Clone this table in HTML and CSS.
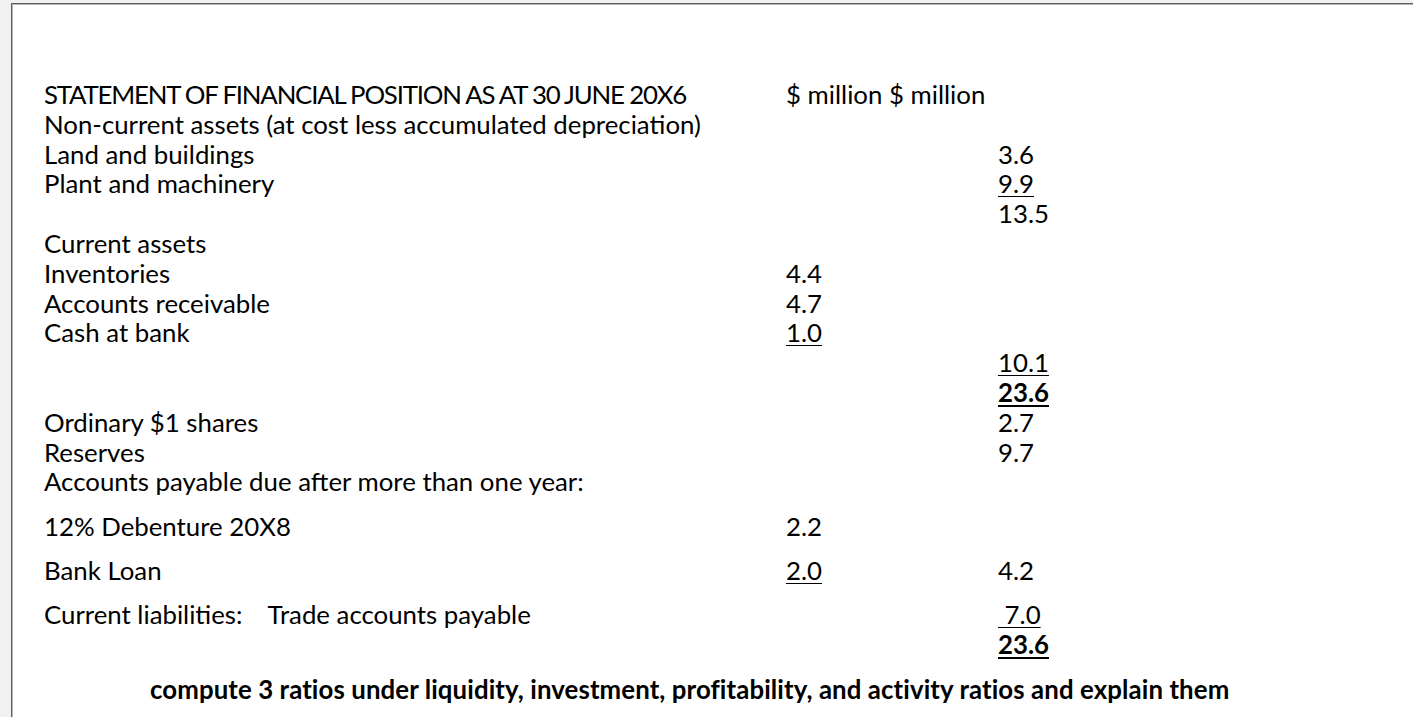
FILE: index.html
```html
<!DOCTYPE html>
<html>
<head>
<meta charset="utf-8">
<link rel="stylesheet" href="styles.css">
</head>
<body>
<div class="frame">
  <div class="sheet">
    <div class="row"><div class="label title">STATEMENT OF FINANCIAL POSITION AS AT 30 JUNE 20X6</div><div class="c1 wide">$ million $ million</div></div>
    <div class="row"><div class="label">Non-current assets (at cost less accumulated depreciation)</div></div>
    <div class="row"><div class="label">Land and buildings</div><div class="c1"></div><div class="c2">3.6</div></div>
    <div class="row"><div class="label">Plant and machinery</div><div class="c1"></div><div class="c2"><span class="u">9.9</span></div></div>
    <div class="row"><div class="label"></div><div class="c1"></div><div class="c2">13.5</div></div>
    <div class="row"><div class="label">Current assets</div></div>
    <div class="row"><div class="label">Inventories</div><div class="c1">4.4</div></div>
    <div class="row"><div class="label">Accounts receivable</div><div class="c1">4.7</div></div>
    <div class="row"><div class="label">Cash at bank</div><div class="c1"><span class="u">1.0</span></div></div>
    <div class="row"><div class="label"></div><div class="c1"></div><div class="c2"><span class="u">10.1</span></div></div>
    <div class="row"><div class="label"></div><div class="c1"></div><div class="c2"><span class="u b">23.6</span></div></div>
    <div class="row"><div class="label">Ordinary $1 shares</div><div class="c1"></div><div class="c2">2.7</div></div>
    <div class="row"><div class="label">Reserves</div><div class="c1"></div><div class="c2">9.7</div></div>
    <div class="row"><div class="label">Accounts payable due after more than one year:</div></div>
    <div class="row gap"><div class="label">12% Debenture 20X8</div><div class="c1">2.2</div></div>
    <div class="row gap"><div class="label">Bank Loan</div><div class="c1"><span class="u">2.0</span></div><div class="c2">4.2</div></div>
    <div class="row gap"><div class="label">Current liabilities:<span class="tab">Trade accounts payable</span></div><div class="c1"></div><div class="c2"><span class="u">&nbsp;7.0</span></div></div>
    <div class="row"><div class="label"></div><div class="c1"></div><div class="c2"><span class="u b">23.6</span></div></div>
    <div class="question">compute 3 ratios under liquidity, investment, profitability, and activity ratios and explain them</div>
  </div>
</div>
</body>
</html>
```

FILE: styles.css
```css
html, body {
  margin: 0;
  padding: 0;
  height: 100%;
}
body {
  background: #f1f1f1;
  font-family: "Lato", "Open Sans", sans-serif;
  color: #000;
  overflow: hidden;
}
.frame {
  margin: 3px 0 0 11px;
  height: calc(100% - 3px);
  background: #fff;
  border-top: 1px solid #5e5e5e;
  border-left: 1px solid #5e5e5e;
  box-shadow: inset 1px 1px 0 #b8b8b8;
  box-sizing: border-box;
}
.sheet {
  padding: 76px 0 0 32px;
  font-size: 25.8px;
}
.row {
  display: flex;
  height: 29.8px;
  line-height: 29.8px;
  white-space: nowrap;
}
.row.gap {
  margin-top: 14.5px;
}
.label {
  width: 742px;
  flex: none;
}
.title {
  letter-spacing: -1.2px;
}
.c1 {
  width: 212px;
  flex: none;
}
.c1.wide {
  width: auto;
}
.c2 {
  flex: none;
}
.u {
  text-decoration: underline;
  text-decoration-thickness: 1px;
  text-underline-offset: 3px;
}
.b {
  font-weight: 700;
  text-decoration-thickness: 2px;
}
.tab {
  margin-left: 25px;
}
.question {
  margin-top: 15px;
  padding-left: 106px;
  font-weight: 700;
  line-height: 29.8px;
  letter-spacing: 0.1px;
  white-space: nowrap;
}
```
